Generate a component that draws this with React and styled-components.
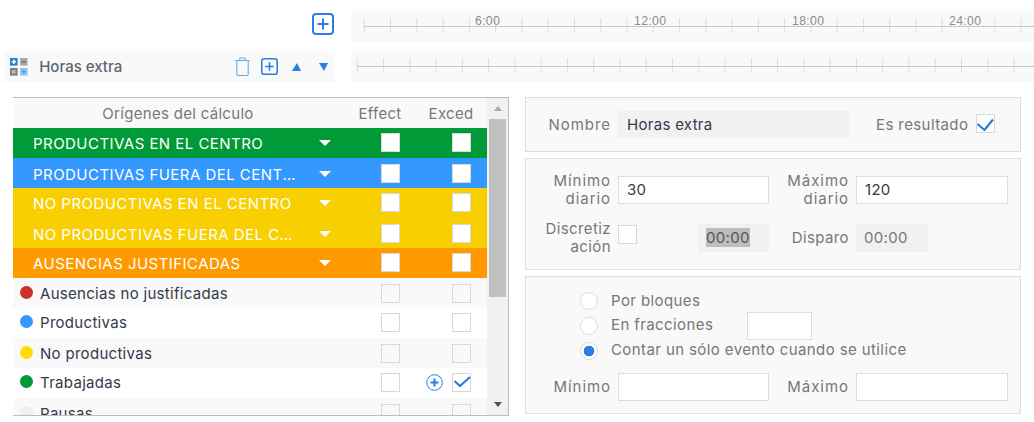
import React from "react";
import styled, { createGlobalStyle } from "styled-components";

const BLUE = "#2a7de1";

const Global = createGlobalStyle`
  body {
    margin: 0;
    background: #ffffff;
    font-family: Inter, "Liberation Sans", sans-serif;
    font-size: 15px;
    letter-spacing: 0.3px;
    color: #777777;
  }
`;

function Ruler({ width, start, labels }) {
  const ticks = [];
  for (let x = start; x < width; x += 26.27) ticks.push(x);
  return (
    <RulerSvg width={width} height="31" viewBox={`0 0 ${width} 31`}>
      {ticks.map((x) => (
        <line key={x} x1={x} x2={x} y1="7" y2="22" stroke="#dddddd" />
      ))}
      <line x1={start} x2={width} y1="15.5" y2="15.5" stroke="#c6c6c6" />
      {labels &&
        labels.map((l) => (
          <text key={l.text} x={l.x} y="14" fontSize="12.3" fontFamily="Liberation Sans, sans-serif" fill="#8c8c8c">
            {l.text}
          </text>
        ))}
    </RulerSvg>
  );
}

function PlusBox({ size, weight }) {
  return (
    <svg width={size} height={size} viewBox="0 0 22 22">
      <rect x="1" y="1" width="20" height="20" rx="3" fill="none" stroke={BLUE} strokeWidth={weight} />
      <path d="M11 5.5v11M5.5 11h11" stroke={BLUE} strokeWidth="2" />
    </svg>
  );
}

function CalcIcon() {
  return (
    <svg width="18" height="18" viewBox="0 0 18 18">
      <rect x="0" y="0" width="7.6" height="7.6" fill="#1f7fe0" />
      <path d="M1.6 3.8h4.4M3.8 1.6V6" stroke="#fff" strokeWidth="1.6" />
      <rect x="10" y="0" width="7.6" height="7.6" fill="#a9a9a9" />
      <path d="M11.8 3.8h4" stroke="#6f6f6f" strokeWidth="1.5" />
      <rect x="0" y="10" width="7.6" height="7.6" fill="#7d7d7d" />
      <path d="M2.2 12.2l3.2 3.2M5.4 12.2l-3.2 3.2" stroke="#c8c8c8" strokeWidth="1.4" />
      <rect x="10" y="10" width="7.6" height="7.6" fill="#8fc4f7" />
      <path d="M11.8 13.8h4" stroke="#1f7fe0" strokeWidth="1" />
      <path d="M13.8 11.6v.9M13.8 15.1v.9" stroke="#1f7fe0" strokeWidth="1" />
    </svg>
  );
}

function TrashIcon() {
  return (
    <svg width="15" height="19" viewBox="0 0 15 19" fill="none" stroke="#6aa8ea" strokeWidth="1.1">
      <path d="M.5 3.5h14M4.5 3.5L5 1h5l.5 2.5" />
      <path d="M1.8 3.5V17a1.5 1.5 0 0 0 1.5 1.5h8.4a1.5 1.5 0 0 0 1.5-1.5V3.5" />
    </svg>
  );
}

function Tick({ large }) {
  return (
    <CheckMark width="19" height="19" viewBox="0 0 19 19">
      <path
        d={large ? "M1.5 10L8.5 16L17 5.5" : "M2.5 8L8 13L18 4"}
        fill="none"
        stroke={BLUE}
        strokeWidth="2.2"
      />
    </CheckMark>
  );
}

function PlusCircle() {
  return (
    <svg width="17" height="17" viewBox="0 0 17 17">
      <circle cx="8.5" cy="8.5" r="7.8" fill="#fff" stroke={BLUE} strokeWidth="1" />
      <path d="M8.5 4.5v8M4.5 8.5h8" stroke={BLUE} strokeWidth="2" />
    </svg>
  );
}

const GROUPS = [
  { name: "PRODUCTIVAS EN EL CENTRO", color: "#009a38" },
  { name: "PRODUCTIVAS FUERA DEL CENTRO", color: "#3399ff" },
  { name: "NO PRODUCTIVAS EN EL CENTRO", color: "#f8cf00" },
  { name: "NO PRODUCTIVAS FUERA DEL CENTRO", color: "#f8cf00" },
  { name: "AUSENCIAS JUSTIFICADAS", color: "#ff9900" },
];

const ITEMS = [
  { name: "Ausencias no justificadas", dot: "#c8302a" },
  { name: "Productivas", dot: "#3399ff" },
  { name: "No productivas", dot: "#ffdd00" },
  { name: "Trabajadas", dot: "#009a38", plus: true, checked: true },
  { name: "Pausas", dot: "#eeeeee" },
];

export default function App() {
  return (
    <Page>
      <Global />
      <TopRow>
        <TopAction>
          <PlusBox size={22} weight={2} />
        </TopAction>
        <Timeline>
          <Ruler
            width={683}
            start={13.3}
            labels={[
              { text: "6:00", x: 124 },
              { text: "12:00", x: 283 },
              { text: "18:00", x: 441 },
              { text: "24:00", x: 598 },
            ]}
          />
        </Timeline>
      </TopRow>

      <ConceptRow>
        <ConceptBar>
          <CalcIcon />
          <ConceptName>Horas extra</ConceptName>
          <ConceptTools>
            <TrashIcon />
            <PlusBox size={17} weight={2} />
            <Arrow $up />
            <Arrow />
          </ConceptTools>
        </ConceptBar>
        <Timeline>
          <Ruler width={683} start={6.3} />
        </Timeline>
      </ConceptRow>

      <Content>
        <SourceTable>
          <TableMain>
            <HeadRow>
              <span>Orígenes del cálculo</span>
              <span>Effect</span>
              <span>Exced</span>
            </HeadRow>
            <Rows>
              {GROUPS.map((g) => (
                <GroupRow key={g.name} $bg={g.color}>
                  <GroupName>{g.name}</GroupName>
                  <Caret />
                  <Box $solid />
                  <span />
                  <Box $solid />
                </GroupRow>
              ))}
              {ITEMS.map((it) => (
                <ItemRow key={it.name}>
                  <ItemName>
                    <Dot $bg={it.dot} />
                    {it.name}
                  </ItemName>
                  <span />
                  <Box />
                  {it.plus ? <PlusSlot><PlusCircle /></PlusSlot> : <span />}
                  <Box>{it.checked && <Tick />}</Box>
                </ItemRow>
              ))}
            </Rows>
          </TableMain>
          <Scrollbar>
            <ScrollArrow $up />
            <ScrollTrack>
              <ScrollThumb />
            </ScrollTrack>
            <ScrollArrow />
          </Scrollbar>
        </SourceTable>

        <Forms>
          <NamePanel>
            <FieldLabel $wide>Nombre</FieldLabel>
            <NameInput>Horas extra</NameInput>
            <ResultField>
              <FieldLabel>Es resultado</FieldLabel>
              <ResultBox>
                <Tick large />
              </ResultBox>
            </ResultField>
          </NamePanel>

          <LimitsPanel>
            <FieldLabel $wide>
              Mínimo
              <br />
              diario
            </FieldLabel>
            <TextField $dark>30</TextField>
            <FieldLabel $wide>
              Máximo
              <br />
              diario
            </FieldLabel>
            <TextField $dark>120</TextField>
            <FieldLabel>
              Discretiz
              <br />
              ación
            </FieldLabel>
            <DiscretCell>
              <Box $solid />
              <TimeField>
                <Selected>00:00</Selected>
              </TimeField>
            </DiscretCell>
            <FieldLabel>Disparo</FieldLabel>
            <TimeField>00:00</TimeField>
          </LimitsPanel>

          <CountPanel>
            <RadioRow>
              <Radio />
              <RadioLabel>Por bloques</RadioLabel>
            </RadioRow>
            <RadioRow>
              <Radio />
              <RadioLabel $fixed>En fracciones</RadioLabel>
              <FractionField />
            </RadioRow>
            <RadioRow>
              <Radio $on />
              <RadioLabel>Contar un sólo evento cuando se utilice</RadioLabel>
            </RadioRow>
            <MinMaxRow>
              <FieldLabel $wide>Mínimo</FieldLabel>
              <TextField />
              <FieldLabel $wide>Máximo</FieldLabel>
              <TextField />
            </MinMaxRow>
          </CountPanel>
        </Forms>
      </Content>
    </Page>
  );
}

const Page = styled.div`
  width: 1034px;
  height: 422px;
  overflow: hidden;
  padding-top: 11px;
  box-sizing: border-box;
`;

const TopRow = styled.div`
  display: flex;
  height: 30px;
`;

const TopAction = styled.div`
  width: 333.5px;
  margin-right: 17.5px;
  display: flex;
  justify-content: flex-end;
  align-items: flex-start;
  padding-top: 2px;
  box-sizing: border-box;
`;

const Timeline = styled.div`
  flex: 1;
  height: 31px;
  background: #f9f9f9;
  overflow: hidden;
`;

const RulerSvg = styled.svg`
  display: block;
`;

const ConceptRow = styled.div`
  display: flex;
  height: 31px;
  margin-top: 10px;
  padding-left: 4px;
  gap: 16px;
`;

const ConceptBar = styled.div`
  width: 331px;
  background: #f9f9f9;
  display: flex;
  align-items: center;
  padding-left: 5.7px;
  box-sizing: border-box;
`;

const ConceptName = styled.span`
  margin-left: 11.5px;
  font-size: 15px;
  font-weight: 500;
  letter-spacing: 0;
  color: #5f6670;
`;

const ConceptTools = styled.div`
  margin-left: auto;
  display: flex;
  align-items: center;
  padding-right: 7px;
  gap: 11px;
`;

const Arrow = styled.span`
  width: 0;
  height: 0;
  margin-left: ${(p) => (p.$up ? "3px" : "7px")};
  border-left: 5px solid transparent;
  border-right: 4px solid transparent;
  ${(p) => (p.$up ? `border-bottom: 8px solid ${BLUE};` : `border-top: 8px solid ${BLUE};`)}
`;

const Content = styled.div`
  display: flex;
  margin-top: 15px;
  padding-left: 13px;
  gap: 16px;
`;

const SourceTable = styled.div`
  width: 496px;
  height: 319px;
  box-sizing: border-box;
  display: flex;
  border: 1px solid #bdbdbd;
  border-left: none;
`;

const TableMain = styled.div`
  width: 474px;
  display: flex;
  flex-direction: column;
`;

const HeadRow = styled.div`
  height: 30px;
  flex: none;
  background: #f9f9f9;
  display: grid;
  grid-template-columns: 330px 74px 68px;
  align-items: center;
  text-align: center;
  color: #777777;
`;

const Rows = styled.div`
  flex: 1;
  overflow: hidden;
`;

const BaseRow = styled.div`
  height: 30px;
  box-sizing: border-box;
  padding-top: 5px;
  display: grid;
  grid-template-columns: 306px 62px 43px 28px 19px;
  align-items: start;
  &:nth-child(even) {
    padding-top: 6px;
  }
`;

const GroupRow = styled(BaseRow)`
  background: ${(p) => p.$bg};
`;

const ItemRow = styled(BaseRow)`
  background: #ffffff;
  &:nth-child(even) {
    background: #f9f9f9;
  }
`;

const GroupName = styled.div`
  margin-left: 20px;
  width: 266px;
  line-height: 21px;
  letter-spacing: 0.46px;
  color: #ffffff;
  white-space: nowrap;
  overflow: hidden;
  text-overflow: ellipsis;
`;

const Caret = styled.span`
  width: 0;
  height: 0;
  margin-top: 7px;
  border-left: 6px solid transparent;
  border-right: 6px solid transparent;
  border-top: 6px solid #ffffff;
`;

const ItemName = styled.div`
  display: flex;
  align-items: center;
  gap: 7px;
  padding-left: 7px;
  line-height: 19px;
  color: #333a4a;
`;

const Dot = styled.span`
  width: 13px;
  height: 13px;
  border-radius: 50%;
  margin-top: -2px;
  background: ${(p) => p.$bg};
`;

const Box = styled.span`
  position: relative;
  display: block;
  width: 19px;
  height: 19px;
  box-sizing: border-box;
  border: 1px solid #d8d8d8;
  background: ${(p) => (p.$solid ? "#ffffff" : "transparent")};
`;

const CheckMark = styled.svg`
  position: absolute;
  left: -1px;
  top: -1px;
`;

const PlusSlot = styled.span`
  display: block;
  margin-left: 2px;
  margin-top: 1px;
  line-height: 0;
`;

const Scrollbar = styled.div`
  width: 21px;
  background: #f1f1f1;
  display: flex;
  flex-direction: column;
  align-items: center;
`;

const ScrollArrow = styled.span`
  flex: none;
  width: 0;
  height: 0;
  margin: ${(p) => (p.$up ? "8px 0 5px" : "5px 0 8px")};
  border-left: 4px solid transparent;
  border-right: 4px solid transparent;
  ${(p) => (p.$up ? "border-bottom: 5px solid #a8a8a8;" : "border-top: 5px solid #505050;")}
`;

const ScrollTrack = styled.div`
  flex: 1;
  width: 100%;
  padding: 3px 2px 0;
  box-sizing: border-box;
`;

const ScrollThumb = styled.div`
  height: 178px;
  background: #c1c1c1;
`;

const Forms = styled.div`
  width: 496px;
  display: flex;
  flex-direction: column;
  gap: 6px;
`;

const Panel = styled.div`
  box-sizing: border-box;
  background: #f9f9f9;
  border: 1px solid #dddddd;
`;

const FieldLabel = styled.div`
  text-align: right;
  line-height: 18px;
  letter-spacing: ${(p) => (p.$wide ? "0.95px" : "0.4px")};
  color: #777777;
`;

const NamePanel = styled(Panel)`
  height: 55px;
  display: grid;
  grid-template-columns: 85px 231px 1fr;
  column-gap: 7px;
  align-items: center;
`;

const NameInput = styled.div`
  height: 27px;
  line-height: 27px;
  padding-left: 9px;
  background: #f1f1f1;
  color: #333a4a;
`;

const ResultField = styled.div`
  display: flex;
  align-items: center;
  gap: 8px;
  margin-left: 20px;
`;

const ResultBox = styled(Box)`
  margin-top: -2px;
  background: #ffffff;
`;

const LimitsPanel = styled(Panel)`
  height: 112px;
  padding-top: 17px;
  display: grid;
  grid-template-columns: 85px 151px 73px 152px;
  grid-auto-rows: 28px;
  column-gap: 7px;
  row-gap: 20px;
  align-items: center;
  justify-items: stretch;
`;

const TextField = styled.div`
  height: 28px;
  line-height: 26px;
  box-sizing: border-box;
  padding-left: 8px;
  background: #ffffff;
  border: 1px solid #dddddd;
  color: ${(p) => (p.$dark ? "#333a4a" : "#777777")};
`;

const TimeField = styled.div`
  width: 72px;
  height: 28px;
  line-height: 28px;
  box-sizing: border-box;
  padding-left: 8px;
  background: #f1f1f1;
  color: #777777;
`;

const DiscretCell = styled.div`
  display: flex;
  justify-content: space-between;
  align-items: center;
  ${Box} {
    margin-top: -8px;
  }
  ${TimeField} {
    width: 71px;
  }
`;

const Selected = styled.span`
  display: inline-block;
  line-height: 19px;
  background: #bdbdbd;
  color: #555555;
`;

const CountPanel = styled(Panel)`
  height: 138px;
  padding-top: 11px;
`;

const RadioLabel = styled.span`
  width: ${(p) => (p.$fixed ? "136px" : "auto")};
  margin-top: -2px;
  letter-spacing: 0.4px;
  color: #777777;
`;

const RadioRow = styled.div`
  height: 25px;
  padding-left: 54px;
  display: flex;
  align-items: center;
  gap: 13px;
  &:first-child ${RadioLabel} {
    margin-top: -1px;
  }
`;

const Radio = styled.span`
  flex: none;
  width: 18px;
  height: 18px;
  box-sizing: border-box;
  border-radius: 50%;
  background: ${(p) => (p.$on ? `radial-gradient(circle, ${BLUE} 0 5px, #ffffff 5.6px)` : "#ffffff")};
  border: 1px solid #dddddd;
`;

const FractionField = styled.div`
  width: 65px;
  height: 28px;
  flex: none;
  margin-left: -13px;
  box-sizing: border-box;
  background: #ffffff;
  border: 1px solid #dddddd;
`;

const MinMaxRow = styled.div`
  display: grid;
  grid-template-columns: 85px 151px 73px 152px;
  column-gap: 7px;
  align-items: center;
  margin-top: 10px;
`;
